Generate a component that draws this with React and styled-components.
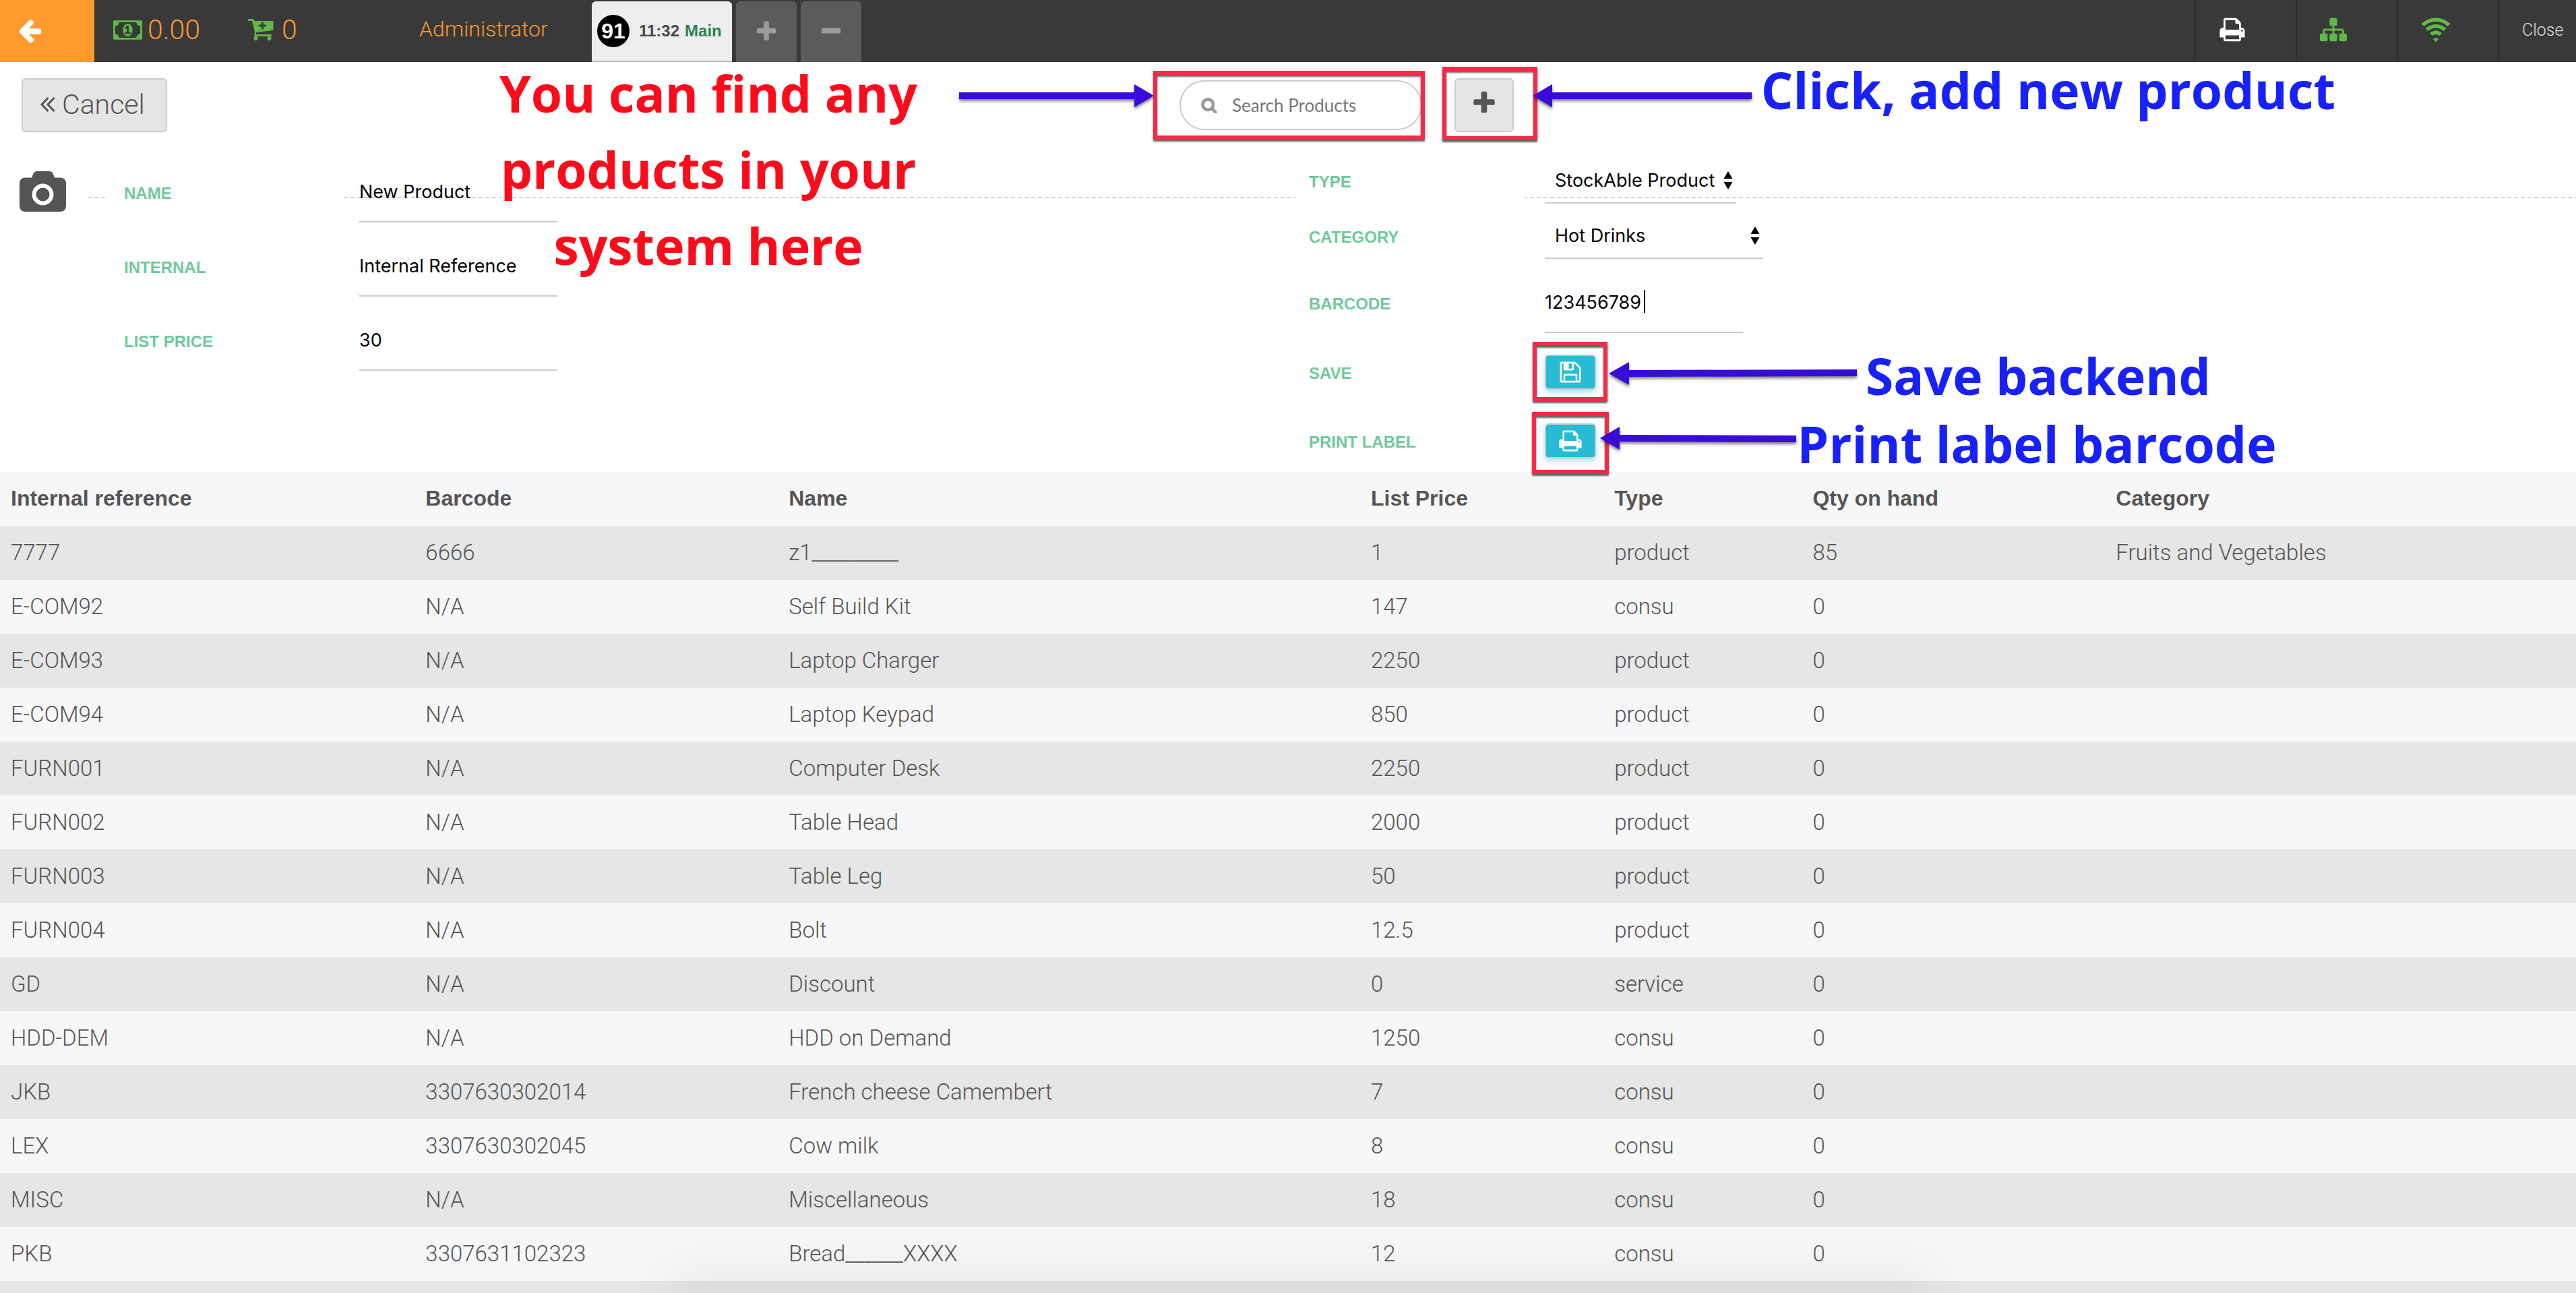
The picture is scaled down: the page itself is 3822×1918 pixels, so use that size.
import React from 'react';
import styled, { createGlobalStyle, css } from 'styled-components';

const sans = '"Liberation Sans", Arial, sans-serif';
const light = 'Roboto, "Liberation Sans", sans-serif';
const system = 'Inter, "Liberation Sans", sans-serif';

const GlobalStyle = createGlobalStyle`
  *, *::before, *::after { box-sizing: border-box; }
  body { margin: 0; background: #fff; color: #555; font-family: ${sans}; }
  button, input, select { font: inherit; color: inherit; margin: 0; outline: none; }
`;

const Screen = styled.div`
  position: relative;
  height: 100vh;
  overflow: hidden;
`;

/* ---------- icons ---------- */

const Glyph = styled.svg`
  display: block;
  flex: none;
  width: ${(p) => p.$w}px;
  height: ${(p) => p.$h || p.$w}px;
  fill: currentColor;
`;

const paths = {
  back: 'M1664 896v128q0 53-32.5 90.5t-84.5 37.5h-704l293 294q38 36 38 90t-38 90l-75 76q-37 37-90 37-52 0-91-37l-651-652q-37-37-37-90 0-52 37-91l651-650q38-38 91-38 52 0 90 38l75 74q38 38 38 91t-38 91l-293 293h704q52 0 84.5 37.5t32.5 90.5z',
  plus: 'M1600 736v192q0 40-28 68t-68 28h-416v416q0 40-28 68t-68 28h-192q-40 0-68-28t-28-68v-416h-416q-40 0-68-28t-28-68v-192q0-40 28-68t68-28h416v-416q0-40 28-68t68-28h192q40 0 68 28t28 68v416h416q40 0 68 28t28 68z',
  minus: 'M1600 736v192q0 40-28 68t-68 28h-1216q-40 0-68-28t-28-68v-192q0-40 28-68t68-28h1216q40 0 68 28t28 68z',
  print: 'M448 1536h896v-256h-896v256zm0-640h896v-384h-160q-40 0-68-28t-28-68v-160h-640v640zm1152 64q0-26-19-45t-45-19-45 19-19 45 19 45 45 19 45-19 19-45zm128 0v416q0 13-9.5 22.5t-22.5 9.5h-224v160q0 40-28 68t-68 28h-960q-40 0-68-28t-28-68v-160h-224q-13 0-22.5-9.5t-9.5-22.5v-416q0-79 56.5-135.5t135.5-56.5h64v-544q0-40 28-68t68-28h672q40 0 88 20t76 48l152 152q28 28 48 76t20 88v256h64q79 0 135.5 56.5t56.5 135.5z',
  save: 'M512 1536h768v-384h-768v384zm896 0h128v-896q0-14-10-38.5t-20-34.5l-281-281q-10-10-34-20t-39-10v416q0 40-28 68t-68 28h-576q-40 0-68-28t-28-68v-416h-128v1280h128v-416q0-40 28-68t68-28h832q40 0 68 28t28 68v416zm-384-928v-320q0-13-9.5-22.5t-22.5-9.5h-192q-13 0-22.5 9.5t-9.5 22.5v320q0 13 9.5 22.5t22.5 9.5h192q13 0 22.5-9.5t9.5-22.5zm640 32v928q0 40-28 68t-68 28h-1344q-40 0-68-28t-28-68v-1344q0-40 28-68t68-28h928q40 0 88 20t76 48l280 280q28 28 48 76t20 88z',
  sitemap: 'M1792 1248v320q0 40-28 68t-68 28h-320q-40 0-68-28t-28-68v-320q0-40 28-68t68-28h96v-192h-512v192h96q40 0 68 28t28 68v320q0 40-28 68t-68 28h-320q-40 0-68-28t-28-68v-320q0-40 28-68t68-28h96v-192h-512v192h96q40 0 68 28t28 68v320q0 40-28 68t-68 28h-320q-40 0-68-28t-28-68v-320q0-40 28-68t68-28h96v-192q0-52 38-90t90-38h512v-192h-96q-40 0-68-28t-28-68v-320q0-40 28-68t68-28h320q40 0 68 28t28 68v320q0 40-28 68t-68 28h-96v192h512q52 0 90 38t38 90v192h96q40 0 68 28t28 68z',
  search: 'M1216 832q0-185-131.5-316.5t-316.5-131.5-316.5 131.5-131.5 316.5 131.5 316.5 316.5 131.5 316.5-131.5 131.5-316.5zm512 832q0 52-38 90t-90 38q-54 0-90-38l-343-342q-179 124-399 124-143 0-273.5-55.5t-225-150-150-225-55.5-273.5 55.5-273.5 150-225 225-150 273.5-55.5 273.5 55.5 225 150 150 225 55.5 273.5q0 220-124 399l343 343q37 37 37 90z',
};

const Icon = ({ name, size, weight = 0 }) => (
  <Glyph $w={size} viewBox="0 0 1792 1792" aria-hidden="true">
    <path d={paths[name]} stroke="currentColor" strokeWidth={weight} />
  </Glyph>
);

const MoneyIcon = () => (
  <Glyph $w={43} $h={29} viewBox="0 256 1920 1280" aria-hidden="true">
    <path d="M768 1152h384v-96h-128v-448h-114l-148 137 77 80q42-37 55-57h2v288h-128v96zm512-256q0 70-21 142t-59.5 134-101.5 101-138 39-138-39-101.5-101-59.5-134-21-142 21-142 59.5-134 101.5-101 138-39 138 39 101.5 101 59.5 134 21 142zm512 256v-512q-106 0-181-75t-75-181h-1152q0 106-75 181t-181 75v512q106 0 181 75t75 181h1152q0-106 75-181t181-75zm128-832v1152q0 26-19 45t-45 19h-1792q-26 0-45-19t-19-45v-1152q0-26 19-45t45-19h1792q26 0 45 19t19 45z" />
  </Glyph>
);

const CartIcon = () => (
  <Glyph $w={38} $h={32} viewBox="0 0 38 32" aria-hidden="true">
    <path
      fillRule="evenodd"
      d="M1 0h6.500q1 0 1.200 1l.4 2h27.400q1 0 1 1v12q0 1-1 1.100l-24.300 3 -.6 3h22.500q1 0 1 1v.8q0 1-1 1H10.500q-1.500 0-1.300-1.500l.9-4.700L6 3H1Q0 3 0 2V1Q0 0 1 0zM19.800 4.500v4h-4v3h4v4h3v-4h4v-3h-4v-4z"
    />
    <circle cx="11.500" cy="29" r="3" />
    <circle cx="31.500" cy="29" r="3" />
  </Glyph>
);

const WifiIcon = () => (
  <Glyph $w={44} $h={38} viewBox="0 0 44 38" aria-hidden="true">
    <g fill="none" stroke="currentColor" strokeWidth="5.500">
      <path d="M2.500 12.300a27.500 27.500 0 0 1 39 0" />
      <path d="M8.700 19.200a19 19 0 0 1 26.600 0" />
      <path d="M14.800 26a10.500 10.500 0 0 1 14.400 0" />
    </g>
    <path d="M22 37.500l-4-4.500q4-3.400 8 0z" />
  </Glyph>
);

const CameraIcon = () => (
  <Glyph $w={70} $h={60} viewBox="0 0 70 60" aria-hidden="true">
    <path d="M9 9.500h9l2-5Q21.500 0 26 0h18q4.500 0 6 4.500l2 5h8q9 0 9 9V51q0 9-9 9H9q-9 0-9-9V18.500q0-9 9-9z" />
    <circle cx="34.500" cy="34.500" r="13" fill="none" stroke="#fff" strokeWidth="6" />
  </Glyph>
);

const DoubleLeft = () => (
  <Glyph $w={22} $h={24} viewBox="0 0 22 24" aria-hidden="true">
    <path d="M11.500 2L2 12l9.500 10M20.500 2L11 12l9.500 10" fill="none" stroke="currentColor" strokeWidth="3" />
  </Glyph>
);

/* ---------- top bar ---------- */

const TopBar = styled.header`
  display: flex;
  height: 92px;
  background: #393939;
  color: #ff9a2e;
  font-family: ${light};
  font-weight: 300;
  font-size: 32px;
`;

const BackButton = styled.button`
  display: flex;
  align-items: center;
  width: 140px;
  padding: 0 24px 2px;
  margin-right: 28px;
  border: 0;
  background: #ff9a2e;
  color: #fff;
`;

const Counter = styled.div`
  display: flex;
  align-items: center;
  gap: ${(p) => p.$gap}px;
  width: ${(p) => p.$width}px;
  padding-bottom: 4px;
  font-size: 41px;
  svg { color: #5fb946; }
`;

const UserName = styled.div`
  display: flex;
  align-items: center;
  width: 256px;
  padding-bottom: 6px;
`;

const Tabs = styled.nav`
  display: flex;
  gap: 6px;
  padding-top: 2px;
`;

const OrderTab = styled.button`
  display: flex;
  align-items: center;
  gap: 8px;
  width: 208px;
  padding: 0 8px;
  border: 0;
  border-bottom: 2px solid #bbb;
  border-radius: 6px 6px 0 0;
  background: #eee;
  color: #4a4a4a;
  font: 700 24px ${sans};
`;

const OrderNumber = styled.span`
  width: 48px;
  margin-right: 6px;
  border-radius: 50%;
  background: #000;
  color: #fff;
  font-size: 32px;
  line-height: 48px;
  text-align: center;
`;

const OrderPlace = styled.span`
  color: #2f8055;
`;

const TabButton = styled.button`
  display: grid;
  place-items: center;
  width: 90px;
  padding: 0;
  border: 0;
  border-radius: 6px 6px 0 0;
  background: #5b5b5b;
  color: #9c9c9c;
`;

const Tools = styled.div`
  display: flex;
  margin-left: auto;
`;

const Tool = styled.button`
  display: flex;
  align-items: center;
  min-width: ${(p) => (p.$text ? 116 : 150)}px;
  padding: 0 0 4px 34px;
  border: 0;
  border-left: 2px solid #2b2b2b;
  background: none;
  color: ${(p) => p.$color};
  font-weight: 300;
  font-size: 25px;
`;

/* ---------- tool row ---------- */

const ActionRow = styled.div`
  display: grid;
  grid-template-columns: 1750fr 408fr 1664fr;
  align-items: center;
  padding-top: 24px;
`;

const greyButton = css`
  height: 80px;
  border: 2px solid #ccc;
  border-radius: 6px;
  background: #e5e5e5;
  color: #555;
`;

const CancelButton = styled.button`
  ${greyButton}
  display: flex;
  align-items: center;
  gap: 10px;
  width: 216px;
  margin-left: 32px;
  padding: 0 26px 2px;
  font-family: ${light};
  font-weight: 300;
  font-size: 41px;
`;

const AddButton = styled.button`
  ${greyButton}
  display: grid;
  place-items: center;
  width: 88px;
  padding: 0 0 6px;
`;

const SearchBox = styled.label`
  display: flex;
  align-items: center;
  gap: 22px;
  width: 360px;
  height: 74px;
  padding: 0 30px;
  border: 2px solid #ccc;
  border-radius: 37px;
  color: #999;
`;

const SearchInput = styled.input`
  flex: 1;
  min-width: 0;
  padding: 0;
  border: 0;
  background: none;
  font: 400 26px Lato, sans-serif;
  &::placeholder { color: #777; opacity: 1; }
`;

/* ---------- product form ---------- */

const Form = styled.form`
  position: relative;
  display: grid;
  grid-template-columns: 157px minmax(0, 1765fr) minmax(0, 1900fr);
  &::before {
    content: '';
    position: absolute;
    z-index: -1;
    top: 96px;
    left: 0;
    right: 0;
    height: 2px;
    background: repeating-linear-gradient(90deg, #d6d6d6 0 6px, transparent 6px 10px);
  }
`;

const PhotoButton = styled.button`
  align-self: start;
  width: 129px;
  height: 88px;
  margin-top: 44px;
  padding: 0 0 0 29px;
  border: 0;
  background: #fff;
  color: #555;
`;

const FieldColumn = styled.div`
  padding: ${(p) => p.$top}px 0 20px;
`;

const Field = styled.div`
  display: grid;
  grid-template-columns: ${(p) => p.$labelWidth}px auto;
  column-gap: ${(p) => p.$inset}px;
  justify-content: start;
  align-items: center;
  margin-bottom: ${(p) => p.$after || 0}px;
`;

const FieldLabel = styled.label`
  display: flex;
  align-items: center;
  align-self: stretch;
  padding: 3px 0 0 ${(p) => p.$indent}px;
  background: #fff;
  color: #70c99b;
  font-weight: 700;
  font-size: 24px;
`;

const control = css`
  border: 0;
  border-bottom: 2px solid #ccc;
  border-radius: 0;
  background: transparent;
  color: #000;
  font-family: ${system};
  font-size: 27px;
`;

const TextInput = styled.input`
  ${control}
  width: 294px;
  height: 90px;
  padding: 0;
`;

const CaretField = styled.div`
  position: relative;
  &::after {
    content: '';
    position: absolute;
    left: 147px;
    top: 26px;
    width: 2px;
    height: 34px;
    background: #000;
  }
`;

const SelectBox = styled.div`
  position: relative;
  width: ${(p) => p.$width}px;
  svg {
    position: absolute;
    right: 5px;
    top: 20px;
    pointer-events: none;
    color: #000;
  }
`;

const Select = styled.select`
  ${control}
  appearance: none;
  width: 100%;
  height: 68px;
  padding: 0 0 0 15px;
`;

const UpDown = () => (
  <Glyph $w={14} $h={28} viewBox="0 0 14 28" aria-hidden="true">
    <path d="M7 0l6.500 11H.5zM7 27L.5 16h13z" />
  </Glyph>
);

const CyanButton = styled.button`
  display: grid;
  place-items: center;
  width: 76px;
  height: 52px;
  padding: 0;
  border: 2px solid #c8c8c8;
  border-radius: 6px;
  background: #27bcd4;
  color: #fff;
  box-shadow: 0 4px 8px rgba(39, 188, 212, 0.4);
`;

/* ---------- product table ---------- */

const ProductTable = styled.table`
  width: 100%;
  table-layout: fixed;
  border-collapse: collapse;
  font-size: 32px;
  text-align: left;
`;

const HeadCell = styled.th`
  width: ${(p) => p.$width}%;
  height: 80px;
  padding: 0 0 2px 16px;
  font-weight: 700;
`;

const Row = styled.tr`
  background: #f7f7f7;
  tbody &:nth-child(odd) { background: #e6e6e6; }
`;

const Cell = styled.td`
  height: 80px;
  padding: 0 0 2px 16px;
  font-family: ${light};
  font-weight: 300;
  font-size: 33px;
`;

const BottomShade = styled.div`
  position: absolute;
  left: 26%;
  right: 25%;
  bottom: -60px;
  height: 60px;
  box-shadow: 0 -22px 80px rgba(0, 0, 0, 0.08);
`;

/* ---------- annotations over the page ---------- */

const Frame = styled.div`
  position: absolute;
  left: ${(p) => p.$x}px;
  top: ${(p) => p.$y}px;
  width: ${(p) => p.$w}px;
  height: ${(p) => p.$h}px;
  border: 6px solid #f62a47;
  filter: drop-shadow(0 3px 1px rgba(0, 0, 0, 0.6));
  pointer-events: none;
`;

const Note = styled.p`
  position: absolute;
  left: ${(p) => p.$x}px;
  top: ${(p) => p.$y}px;
  width: ${(p) => p.$w}px;
  margin: 0;
  color: ${(p) => p.$color};
  font: 700 75px/113px 'Open Sans', sans-serif;
  text-align: center;
  pointer-events: none;
  white-space: pre-line;
`;

const Arrows = styled.svg`
  position: absolute;
  left: 0;
  top: 0;
  width: 2800px;
  height: 700px;
  fill: #380bd9;
  filter: drop-shadow(0 3px 2px rgba(0, 0, 0, 0.5));
  pointer-events: none;
`;

const columns = [
  ['Internal reference', 16.1],
  ['Barcode', 14.1],
  ['Name', 22.6],
  ['List Price', 9.45],
  ['Type', 7.7],
  ['Qty on hand', 11.77],
  ['Category', 18.28],
];

const products = [
  ['7777', '6666', 'z1_________', '1', 'product', '85', 'Fruits and Vegetables'],
  ['E-COM92', 'N/A', 'Self Build Kit', '147', 'consu', '0', ''],
  ['E-COM93', 'N/A', 'Laptop Charger', '2250', 'product', '0', ''],
  ['E-COM94', 'N/A', 'Laptop Keypad', '850', 'product', '0', ''],
  ['FURN001', 'N/A', 'Computer Desk', '2250', 'product', '0', ''],
  ['FURN002', 'N/A', 'Table Head', '2000', 'product', '0', ''],
  ['FURN003', 'N/A', 'Table Leg', '50', 'product', '0', ''],
  ['FURN004', 'N/A', 'Bolt', '12.5', 'product', '0', ''],
  ['GD', 'N/A', 'Discount', '0', 'service', '0', ''],
  ['HDD-DEM', 'N/A', 'HDD on Demand', '1250', 'consu', '0', ''],
  ['JKB', '3307630302014', 'French cheese Camembert', '7', 'consu', '0', ''],
  ['LEX', '3307630302045', 'Cow milk', '8', 'consu', '0', ''],
  ['MISC', 'N/A', 'Miscellaneous', '18', 'consu', '0', ''],
  ['PKB', '3307631102323', 'Bread______XXXX', '12', 'consu', '0', ''],
  ['', '', '', '', '', '', ''],
];

const leftFields = [
  ['name', 'NAME', 'New Product'],
  ['internal', 'INTERNAL', 'Internal Reference'],
  ['price', 'LIST PRICE', '30'],
];

function RightField({ id, label, after, children }) {
  return (
    <Field $labelWidth={340} $inset={30} $after={after}>
      <FieldLabel htmlFor={id} $indent={20}>{label}</FieldLabel>
      {children}
    </Field>
  );
}

export default function App() {
  return (
    <Screen>
      <GlobalStyle />
      <TopBar>
        <BackButton aria-label="Back"><Icon name="back" size={40} /></BackButton>
        <Counter $gap={8} $width={200}><MoneyIcon />0.00</Counter>
        <Counter $gap={12} $width={254}><CartIcon />0</Counter>
        <UserName>Administrator</UserName>
        <Tabs>
          <OrderTab>
            <OrderNumber>91</OrderNumber>
            <span>11:32</span>
            <OrderPlace>Main</OrderPlace>
          </OrderTab>
          <TabButton aria-label="New order"><Icon name="plus" size={36} /></TabButton>
          <TabButton aria-label="Delete order"><Icon name="minus" size={36} /></TabButton>
        </Tabs>
        <Tools>
          <Tool $color="#fff" aria-label="Printer"><Icon name="print" size={40} /></Tool>
          <Tool $color="#5fb946" aria-label="Network"><Icon name="sitemap" size={40} /></Tool>
          <Tool $color="#5fb946" aria-label="Connection"><WifiIcon /></Tool>
          <Tool $color="#ddd" $text>Close</Tool>
        </Tools>
      </TopBar>

      <ActionRow>
        <CancelButton><DoubleLeft />Cancel</CancelButton>
        <SearchBox>
          <Icon name="search" size={24} weight={90} />
          <SearchInput type="text" placeholder="Search Products" aria-label="Search Products" />
        </SearchBox>
        <AddButton aria-label="Add product"><Icon name="plus" size={40} /></AddButton>
      </ActionRow>

      <Form onSubmit={(e) => e.preventDefault()}>
        <PhotoButton type="button" aria-label="Product photo"><CameraIcon /></PhotoButton>
        <FieldColumn $top={44}>
          {leftFields.map(([id, label, value]) => (
            <Field key={id} $labelWidth={353} $inset={23} $after={20}>
              <FieldLabel htmlFor={id} $indent={27}>{label}</FieldLabel>
              <TextInput id={id} defaultValue={value} />
            </Field>
          ))}
        </FieldColumn>
        <FieldColumn $top={38}>
          <RightField id="type" label="TYPE" after={14}>
            <SelectBox $width={284}>
              <Select id="type"><option>StockAble Product</option></Select>
              <UpDown />
            </SelectBox>
          </RightField>
          <RightField id="category" label="CATEGORY" after={20}>
            <SelectBox $width={324}>
              <Select id="category"><option>Hot Drinks</option></Select>
              <UpDown />
            </SelectBox>
          </RightField>
          <RightField id="barcode" label="BARCODE" after={32}>
            <CaretField><TextInput id="barcode" defaultValue="123456789" /></CaretField>
          </RightField>
          <RightField id="save" label="SAVE" after={50}>
            <CyanButton id="save" type="submit"><Icon name="save" size={36} /></CyanButton>
          </RightField>
          <RightField id="print" label="PRINT LABEL">
            <CyanButton id="print" type="button"><Icon name="print" size={36} /></CyanButton>
          </RightField>
        </FieldColumn>
      </Form>

      <ProductTable>
        <thead>
          <Row>
            {columns.map(([title, width]) => <HeadCell key={title} $width={width}>{title}</HeadCell>)}
          </Row>
        </thead>
        <tbody>
          {products.map((product, i) => (
            <Row key={i}>{product.map((value, j) => <Cell key={j}>{value}</Cell>)}</Row>
          ))}
        </tbody>
      </ProductTable>
      <BottomShade />

      <Frame $x={1711} $y={105} $w={403} $h={102} />
      <Frame $x={2140} $y={99} $w={141} $h={109} />
      <Frame $x={2274} $y={507} $w={111} $h={88} />
      <Frame $x={2273} $y={611} $w={114} $h={92} />
      <Arrows viewBox="0 0 2800 700" aria-hidden="true">
        <path d="M1423 137h260v-12l29 17-29 17v-12h-260z" />
        <path d="M2599 137h-296v-12l-29 17 29 17v-12h296z" />
        <path d="M2755 548l-338 1v-12l-30 17 30 17v-12l338-1z" />
        <path d="M2665 646l-262-1v-12l-29 17 29 17v-12l262 1z" />
      </Arrows>
      <Note $x={731} $y={82} $w={640} $color="#fe0b1b">{'You can find any\nproducts in your\nsystem here'}</Note>
      <Note $x={2589} $y={77} $w={900} $color="#1820fb">Click, add new product</Note>
      <Note $x={2744} $y={501} $w={560} $color="#1820fb">Save backend</Note>
      <Note $x={2642} $y={602} $w={760} $color="#1820fb">Print label barcode</Note>
    </Screen>
  );
}
